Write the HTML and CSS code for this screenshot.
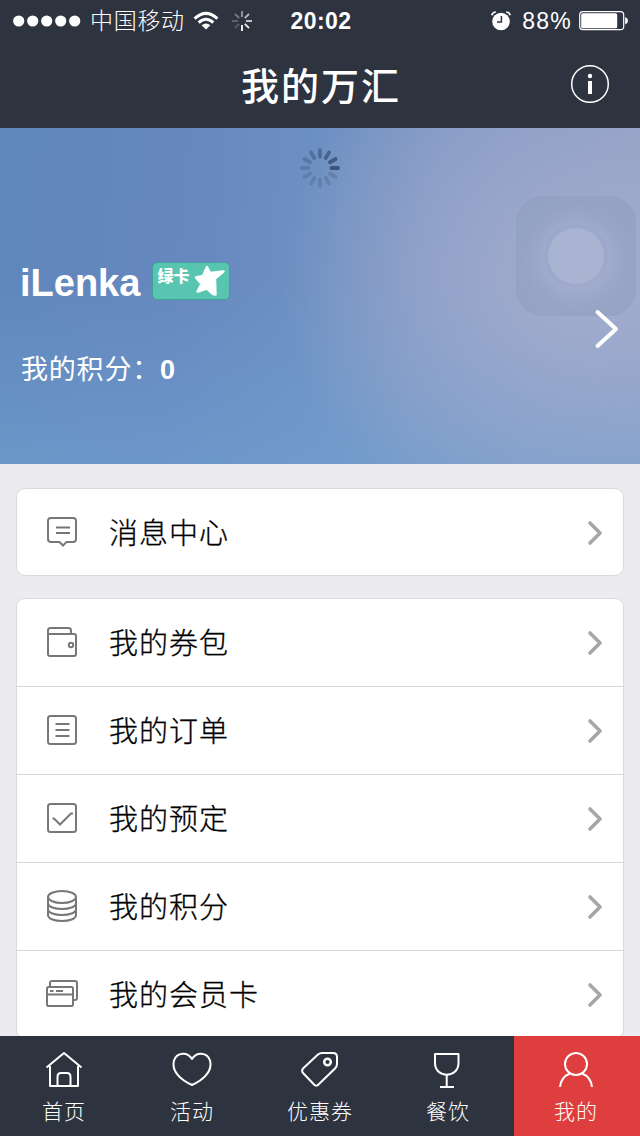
FILE: index.html
```html
<!DOCTYPE html>
<html lang="zh-CN">
<head>
<meta charset="utf-8">
<title>我的万汇</title>
<link rel="stylesheet" href="styles.css">
</head>
<body>
<div class="screen">
  <header class="top">
    <div class="status">
      <div class="status-left">
        <svg class="signal" width="68" height="12" viewBox="0 0 68 12" fill="#fff"><circle cx="5.7" cy="6" r="5.6"/><circle cx="19.7" cy="6" r="5.6"/><circle cx="33.7" cy="6" r="5.6"/><circle cx="47.7" cy="6" r="5.6"/><circle cx="61.7" cy="6" r="5.6"/></svg>
        <span class="carrier">中国移动</span>
        <svg class="wifi" width="26" height="20" viewBox="0 0 26 20" fill="none" stroke="#fff" stroke-width="3"><path d="M1.6 7.6Q13-2.8 24.400 7.600"/><path d="M5.700 11.600Q13 5 20.300 11.600"/><path d="M13 18.600L8.600 14.200Q13 10.600 17.400 14.200Z" fill="#fff" stroke="none"/></svg>
        <svg class="mini-spinner" width="20" height="20" viewBox="-10 -10 20 20" stroke="#fff" stroke-width="1.800"><path d="M0 4V10"/><path d="M2.800 2.800L7 7" opacity=".9"/><path d="M4 0H10" opacity=".8"/><path d="M2.800-2.800L7-7" opacity=".65"/><path d="M0-4V-10" opacity=".5"/><path d="M-2.800-2.800L-7-7" opacity=".35"/><path d="M-4 0H-10" opacity=".25"/><path d="M-2.800 2.800L-7 7" opacity=".2"/></svg>
      </div>
      <span class="clock">20:02</span>
      <div class="status-right">
        <svg class="alarm" width="20" height="20" viewBox="0 0 20 20"><circle cx="10" cy="10.500" r="8.800" fill="#fff"/><path d="M.8 4.200Q1.500 1.300 4.800 1M19.200 4.200Q18.500 1.300 15.200 1" fill="none" stroke="#fff" stroke-width="1.600"/><path d="M10.400 5V11H6" fill="none" stroke="#2e3340" stroke-width="1.500"/></svg>
        <span class="percent">88%</span>
        <svg width="50" height="20" viewBox="0 0 50 20"><rect x=".7" y=".7" width="44" height="18" rx="3.200" fill="none" stroke="#fff" stroke-width="1.200"/><rect x="2.200" y="2.200" width="36" height="15" rx="1.500" fill="#fff"/><path d="M46.200 6Q49 7 49 9.700Q49 12.500 46.200 13.400Z" fill="#fff"/></svg>
      </div>
    </div>
    <div class="nav">
      <h1 class="title">我的万汇</h1>
      <svg class="info" width="40" height="40" viewBox="0 0 40 40"><circle cx="20" cy="20" r="18.300" fill="none" stroke="#fff" stroke-width="1.500"/><circle cx="20" cy="12" r="2.200" fill="#fff"/><path d="M20 17V30" stroke="#fff" stroke-width="4"/></svg>
    </div>
  </header>

  <section class="hero">
    <svg class="spinner" width="40" height="40" viewBox="-20 -20 40 40" stroke="#33496b" stroke-width="3.800" stroke-linecap="round">
      <path d="M11.500 0H18" opacity=".85"/><path d="M11.500 0H18" opacity=".75" transform="rotate(-30)"/><path d="M11.500 0H18" opacity=".65" transform="rotate(-60)"/><path d="M11.500 0H18" opacity=".52" transform="rotate(-90)"/><path d="M11.500 0H18" opacity=".43" transform="rotate(-120)"/><path d="M11.500 0H18" opacity=".34" transform="rotate(-150)"/><path d="M11.500 0H18" opacity=".27" transform="rotate(180)"/><path d="M11.500 0H18" opacity=".25" transform="rotate(150)"/><path d="M11.500 0H18" opacity=".24" transform="rotate(120)"/><path d="M11.500 0H18" opacity=".23" transform="rotate(90)"/><path d="M11.500 0H18" opacity=".23" transform="rotate(60)"/><path d="M11.500 0H18" opacity=".23" transform="rotate(30)"/>
    </svg>
    <div class="user">
      <span class="name">iLenka</span>
      <span class="badge"><span class="badge-text">绿卡</span>
        <svg class="star" width="34" height="36" viewBox="0 0 34 36"><path d="M15 4L18 10L31.500 8.500L23 15.500L23.500 31.500L21 31L15 25.500L5.500 28.500L9.500 21L4 14.500L11 13Z" fill="#fff" stroke="#fff" stroke-width="2.400" stroke-linejoin="round"/></svg>
      </span>
    </div>
    <div class="points">我的积分：<b class="points-num">0</b></div>
    <svg class="hero-arrow" width="26" height="42" viewBox="0 0 26 42"><path d="M3.500 4L22 21L3.500 38" fill="none" stroke="#fff" stroke-width="4" stroke-linecap="round" stroke-linejoin="round"/></svg>
    <div class="assist"><div class="assist-ring"></div></div>
  </section>

  <main class="content">
    <div class="card">
      <div class="row row-single">
        <svg class="icon" viewBox="0 0 36 36"><path d="M6 4H28Q31 4 31 7V25Q31 28 28 28H21.500L18 31.500L14.500 28H6Q3 28 3 25V7Q3 4 6 4Z"/><path d="M11 13.500H25M11 19H25"/></svg>
        <span class="label">消息中心</span><svg class="arrow" viewBox="0 0 16 26"><path d="M3 3L13 13L3 23"/></svg>
      </div>
    </div>
    <div class="card">
      <div class="row">
        <svg class="icon" viewBox="0 0 36 36"><path d="M26 10V6.500Q26 4 23.500 4H5.500Q3 4 3 6.500V30Q3 32 5 32H29Q31 32 31 30V12Q31 10 29 10H3"/><circle cx="26" cy="21" r="2.200"/></svg>
        <span class="label">我的券包</span><svg class="arrow" viewBox="0 0 16 26"><path d="M3 3L13 13L3 23"/></svg>
      </div>
      <div class="row">
        <svg class="icon" viewBox="0 0 36 36"><rect x="3" y="4" width="28" height="28" rx="2.500"/><path d="M10.500 12H24.500M10.500 18H24.500M10.500 24H24.500"/></svg>
        <span class="label">我的订单</span><svg class="arrow" viewBox="0 0 16 26"><path d="M3 3L13 13L3 23"/></svg>
      </div>
      <div class="row">
        <svg class="icon" viewBox="0 0 36 36"><rect x="3" y="4" width="28" height="28" rx="2.500"/><path d="M7.500 18.500H9L15 24.500L26 13.500H28"/></svg>
        <span class="label">我的预定</span><svg class="arrow" viewBox="0 0 16 26"><path d="M3 3L13 13L3 23"/></svg>
      </div>
      <div class="row">
        <svg class="icon" viewBox="0 0 36 36"><ellipse cx="17" cy="9" rx="14" ry="6"/><path d="M3 9V27C3 35 31 35 31 27V9M3 15C3 23 31 23 31 15M3 21C3 29 31 29 31 21"/></svg>
        <span class="label">我的积分</span><svg class="arrow" viewBox="0 0 16 26"><path d="M3 3L13 13L3 23"/></svg>
      </div>
      <div class="row">
        <svg class="icon" viewBox="0 0 36 36"><rect x="2" y="11" width="26" height="19" rx="1.800"/><path d="M5 11V7Q5 5 7 5H30Q32 5 32 7V22Q32 24 30 24H28M2 18.500H28M5 15H8.500M11 15H18"/></svg>
        <span class="label">我的会员卡</span><svg class="arrow" viewBox="0 0 16 26"><path d="M3 3L13 13L3 23"/></svg>
      </div>
    </div>
  </main>

  <nav class="tabs">
    <div class="tab"><svg class="tab-icon" viewBox="0 0 40 40"><path d="M6 16V36H34V16M2.500 17.500L20 3L37.500 17.500M13.500 36V27Q13.500 23 17 23H23Q26.500 23 26.500 27V36"/></svg><span>首页</span></div>
    <div class="tab"><svg class="tab-icon" viewBox="0 0 40 40"><path d="M20 9C15.500 1.500 5 2 2 10.500C-1 22 10 30.500 20 35C30 30.500 41 22 38 10.500C35 2 24.500 1.500 20 9Z"/></svg><span>活动</span></div>
    <div class="tab"><svg class="tab-icon" viewBox="0 0 40 40"><path d="M18 4.500Q20 3 22 3H33Q37 3 37 7V14Q37 16.500 35 18.500L19 34Q16.500 37 14 34.500L3 23Q1 20.500 3.500 18Z"/><circle cx="27.500" cy="12" r="3.300" stroke-width="2.500"/></svg><span>优惠券</span></div>
    <div class="tab"><svg class="tab-icon" viewBox="0 0 40 40"><path d="M7 4H30.500V13C30.500 28.500 7 28.500 7 13ZM18.700 25V37M12 37H26"/></svg><span>餐饮</span></div>
    <div class="tab tab-active"><svg class="tab-icon" viewBox="0 0 40 40"><circle cx="20" cy="14" r="11"/><path d="M4 37Q5 27 14 23.500M36 37Q35 27 26 23.500"/></svg><span>我的</span></div>
  </nav>
</div>
</body>
</html>
```
FILE: styles.css
```css
* { box-sizing: border-box; }
body { margin: 0; font-family: "Liberation Sans", "Noto Sans CJK SC", sans-serif; }
svg { display: block; flex: none; }
.screen { width: 640px; height: 1136px; display: flex; flex-direction: column; overflow: hidden; background: #ebebf0; }
.top { height: 128px; flex: none; background: #2e3340; color: #fff; }
.status { height: 40px; display: grid; grid-template-columns: 1fr auto 1fr; align-items: center; padding: 0 11px 0 13px; }
.status-left { display: flex; align-items: center; }
.carrier { margin-left: 9px; font-size: 23px; font-weight: 300; letter-spacing: 0.7px; line-height: 40px; white-space: nowrap; }
.wifi { margin-left: 8px; }
.mini-spinner { margin-left: 13px; }
.clock { font-size: 23px; font-weight: bold; line-height: 42px; letter-spacing: 0.4px; }
.status-right { display: flex; align-items: center; justify-content: flex-end; }
.alarm { margin-top: -1px; }
.percent { margin: 0 7px 0 11px; font-size: 23px; letter-spacing: 1.2px; }
.nav { height: 88px; display: grid; grid-template-columns: 1fr auto 1fr; align-items: center; padding: 0 30px; }
.title { grid-column: 2; margin: 0; padding: 6px 0 0 2px; font-size: 38px; font-weight: 500; letter-spacing: 2px; line-height: 82px; }
.info { justify-self: end; }

.hero {
  position: relative; height: 336px; flex: none; color: #fff;
  padding: 20px 20px 0; display: flex; flex-direction: column;
  background:
    radial-gradient(ellipse 300px 260px at 580px 150px, rgba(168,176,208,.85), rgba(166,174,207,.5) 45%, rgba(166,174,207,0)),
    linear-gradient(180deg, rgba(112,160,208,0) 45%, rgba(112,160,208,.62) 100%),
    linear-gradient(95deg, #5f87bb 0, #6687bf 28%, #6d90c2 48%, #8098c4 66%, #929fc4 100%);
}
.spinner { align-self: center; }
.user { margin-top: 72px; height: 44px; display: flex; align-items: center; gap: 12px; }
.name { padding-top: 2px; font-size: 38px; font-weight: bold; line-height: 44px; }
.badge { width: 78px; height: 38px; margin-top: -2px; display: flex; border: 1px solid #439f99; border-radius: 5px; background: #57c5b0; padding: 0 0 0 4px; }
.badge-text { font-size: 16px; font-weight: 900; line-height: 28px; white-space: nowrap; }
.star { margin-left: 3px; }
.points { margin-top: 46px; padding-left: 1px; font-size: 27px; letter-spacing: 0.8px; line-height: 40px; }
.points-num { font-weight: bold; }
.hero-arrow { position: absolute; right: 20px; top: 180px; z-index: 1; }
.assist { position: absolute; left: 516px; top: 68px; width: 120px; height: 120px; border-radius: 26px; background: radial-gradient(circle, rgba(136,154,188,.05) 30px, rgba(130,148,182,.3) 54px); display: grid; place-items: center; }
.assist-ring { width: 56px; height: 56px; border-radius: 50%; background: rgba(176,186,214,.6); box-shadow: 0 0 0 4px rgba(140,155,190,.14), 0 0 0 10px rgba(170,182,212,.15); }

.content { flex: 1; min-height: 0; overflow: hidden; padding: 24px 16px 0; display: flex; flex-direction: column; gap: 22px; }
.card { flex: none; background: #fff; border: 1px solid #dadade; border-radius: 9px; }
.row { height: 88px; display: flex; align-items: center; padding: 0 20px 0 28px; border-top: 1px solid #d6d6d8; }
.row:first-child { height: 87px; border-top: 0; }
.row.row-single { height: 86px; padding-top: 1px; }
.icon { width: 36px; height: 36px; margin-top: -2px; fill: none; stroke: #777; stroke-width: 2; }
.label { flex: 1; margin-left: 28px; padding-top: 3px; font-size: 29px; font-weight: 300; -webkit-text-stroke: 0.3px #000; letter-spacing: 1px; color: #000; line-height: 60px; }
.arrow { width: 16px; height: 26px; fill: none; stroke: #a6a6a6; stroke-width: 3.6; stroke-linecap: round; stroke-linejoin: round; }

.tabs { height: 100px; flex: none; display: flex; background: #2e3340; color: #fff; }
.tab { width: 128px; display: flex; flex-direction: column; align-items: center; padding-top: 14px; font-size: 21px; font-weight: 300; letter-spacing: 1px; line-height: 44px; }
.tab-icon { width: 40px; height: 40px; fill: none; stroke: #fff; stroke-width: 2; stroke-linejoin: round; }
.tab-active { width: 126px; margin-left: 2px; padding-right: 2px; background: #df3e3e; }
```
